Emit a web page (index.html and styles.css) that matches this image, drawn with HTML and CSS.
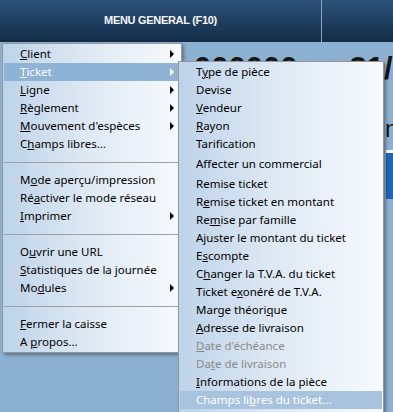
FILE: index.html
```html
<!DOCTYPE html>
<html lang="fr">
<head>
  <meta charset="UTF-8">
  <title>Menu général</title>
  <meta name="viewport" content="width=device-width, initial-scale=1.0">
  <link rel="stylesheet" href="styles.css">
</head>
<body>
  <header class="topbar">
    <div class="topbar-title">MENU GENERAL (F10)</div>
    <div class="topbar-side"></div>
  </header>

  <section class="board">
    <div class="board-row">
      <span class="ticket-no">000000</span>
      <span class="ticket-date">31/</span>
    </div>
    <div class="board-unit">n</div>
    <div class="board-strip"></div>
  </section>

  <ul class="menu main-menu">
    <li class="item sub"><u>C</u>lient</li>
    <li class="item sub active"><u>T</u>icket</li>
    <li class="item sub"><u>L</u>igne</li>
    <li class="item sub"><u>R</u>èglement</li>
    <li class="item sub"><u>M</u>ouvement d'espèces</li>
    <li class="item">C<u>h</u>amps libres...</li>
    <li class="sep"></li>
    <li class="item">M<u>o</u>de aperçu/impression</li>
    <li class="item">Ré<u>a</u>ctiver le mode réseau</li>
    <li class="item sub"><u>I</u>mprimer</li>
    <li class="sep"></li>
    <li class="item">O<u>u</u>vrir une URL</li>
    <li class="item"><u>S</u>tatistiques de la journée</li>
    <li class="item sub">Mo<u>d</u>ules</li>
    <li class="sep"></li>
    <li class="item"><u>F</u>ermer la caisse</li>
    <li class="item">A <u>p</u>ropos...</li>
  </ul>

  <ul class="menu sub-menu">
    <li class="item">T<u>y</u>pe de pièce</li>
    <li class="item">Devise</li>
    <li class="item"><u>V</u>endeur</li>
    <li class="item"><u>R</u>ayon</li>
    <li class="item">Tarification</li>
    <li class="item tall">Affecter un commercial</li>
    <li class="item">Remise ticket</li>
    <li class="item">R<u>e</u>mise ticket en montant</li>
    <li class="item">Re<u>m</u>ise par famille</li>
    <li class="item">Ajuster le montant du ticket</li>
    <li class="item">E<u>s</u>compte</li>
    <li class="item">C<u>h</u>anger la T.V.A. du ticket</li>
    <li class="item">Ticket e<u>x</u>onéré de T.V.A.</li>
    <li class="item">Marge théori<u>q</u>ue</li>
    <li class="item"><u>A</u>dresse de livraison</li>
    <li class="item disabled"><u>D</u>ate d'échéance</li>
    <li class="item disabled">Da<u>t</u>e de livraison</li>
    <li class="item"><u>I</u>nformations de la pièce</li>
    <li class="item hover">Champs li<u>b</u>res du ticket...</li>
  </ul>
</body>
</html>
```

FILE: styles.css
```css
html, body {
  margin: 0;
  padding: 0;
}
body {
  width: 393px;
  height: 412px;
  overflow: hidden;
  position: relative;
  font-family: 'Noto Sans', sans-serif;
  font-size: 11.5px;
  background: #8cb0d0;
}
.topbar {
  display: flex;
  height: 42px;
  background: linear-gradient(#2e5379, #112c47);
}
.topbar-title {
  width: 321px;
  border-right: 1px solid #8ea5bc;
  color: #f4f7fa;
  font-family: 'Liberation Sans', sans-serif;
  font-weight: bold;
  font-size: 11px;
  letter-spacing: -0.3px;
  line-height: 40px;
  text-align: center;
}
.topbar-side {
  flex: 1;
}
.board {
  height: 370px;
  overflow: hidden;
  background: #8cb0d0;
  color: #151515;
  font-family: 'Liberation Sans', sans-serif;
  font-weight: bold;
}
.board-row {
  display: flex;
  padding: 10px 0 0 194px;
  font-size: 31px;
  line-height: 34px;
}
.ticket-date {
  margin-left: 52px;
}
.board-unit {
  padding: 28px 0 0 385px;
  font-size: 24px;
  font-weight: normal;
  line-height: 30px;
}
.board-strip {
  margin: 6px 0 0 386px;
  height: 46px;
  background: #1f66b8;
  border-top: 3px dotted #fff;
}
.menu {
  position: absolute;
  margin: 0;
  padding: 1px 0;
  list-style: none;
  border: 1px solid #979797;
  background: linear-gradient(to right, #bdd3e8, #dde8f3 45%, #f7fafd);
  box-shadow: 2px 2px 3px rgba(0, 0, 0, 0.35);
  color: #000;
}
.main-menu {
  left: 2px;
  top: 43px;
  width: 178px;
}
.sub-menu {
  left: 178px;
  top: 61px;
  width: 204px;
  height: 360px;
}
.item {
  position: relative;
  height: 18px;
  line-height: 18px;
  margin: 0 1px;
  padding-left: 16px;
  white-space: nowrap;
}
.main-menu .item {
  margin-right: 3px;
}
.item.tall {
  height: 22px;
  line-height: 21px;
}
.item.sub::after {
  content: '';
  position: absolute;
  right: 4px;
  top: 5px;
  border-left: 4px solid #000;
  border-top: 4px solid transparent;
  border-bottom: 4px solid transparent;
}
.item.active {
  background: #8fb3d5;
  color: #fff;
}
.item.active::after {
  border-left-color: #fff;
}
.item.hover {
  background: #a8c3de;
  color: #fff;
}
.item.disabled {
  color: #8a8a8a;
}
.sep {
  height: 1px;
  margin: 9px 1px 8px;
  background: #a0a0a0;
}
```
